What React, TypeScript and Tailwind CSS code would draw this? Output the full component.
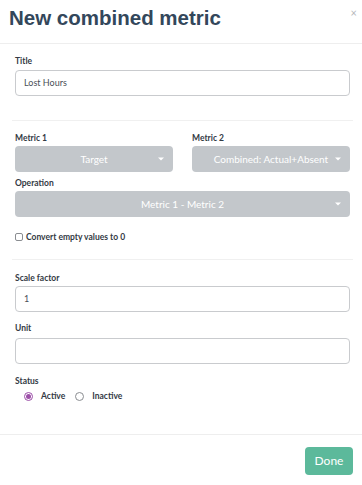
const Caret = () => (
  <span className="absolute right-[9px] top-1/2 -translate-y-1/2 w-0 h-0 border-l-[3px] border-r-[3px] border-t-[3px] border-l-transparent border-r-transparent border-t-white" />
);

const Select = ({ value, className }: { value: string; className?: string }) => (
  <div
    className={
      "relative h-[26px] rounded-[4px] bg-[#c3c7cb] flex items-center justify-center text-white text-[10px] " +
      (className || "")
    }
  >
    <span>{value}</span>
    <Caret />
  </div>
);

const Label = ({ children, className }: { children: React.ReactNode; className?: string }) => (
  <div className={"h-[12px] leading-[12px] text-[8.5px] font-bold text-[#333a44] " + (className || "")}>
    {children}
  </div>
);

const Input = ({ value, className }: { value?: string; className?: string }) => (
  <div
    className={
      "h-[26px] rounded-[4px] border border-[#c9cbce] bg-white flex items-center px-[8px] text-[9px] text-[#4a4f57] " +
      (className || "")
    }
  >
    {value}
  </div>
);

export default function App() {
  return (
    <div className="w-[362px] h-[485px] bg-white font-['Lato','Noto_Sans',sans-serif] overflow-hidden">
      <div className="relative h-[44px] border-b border-[#eeeeee] flex items-center pl-[9px]">
        <h1 className="font-['Liberation_Sans',Arial,sans-serif] font-bold text-[20.5px] text-[#33475b] leading-none -mt-[7px]">
          New combined metric
        </h1>
        <span className="absolute right-[5px] top-[7px] text-[11px] leading-none text-[#b5b8bb]">×</span>
      </div>

      <div className="pl-[15px] pr-[12px]">
        <Label className="mt-[11px]">Title</Label>
        <Input value="Lost Hours" className="mt-[3px]" />

        <div className="mt-[24px] -mx-[3px] h-px bg-[#f0f0f0]" />

        <div className="mt-[11px] grid grid-cols-2 gap-x-[19px]">
          <div>
            <Label>Metric 1</Label>
            <Select value="Target" className="mt-[2px]" />
          </div>
          <div>
            <Label>Metric 2</Label>
            <Select value="Combined: Actual+Absent" className="mt-[2px]" />
          </div>
        </div>

        <Label className="mt-[5px]">Operation</Label>
        <Select value="Metric 1 - Metric 2" className="mt-[2px]" />

        <label className="mt-[14px] h-[12px] flex items-center gap-[3px] text-[8.5px] font-bold text-[#333a44]">
          <span className="w-[8px] h-[8px] border border-[#8a8d91] rounded-[2px] bg-white" />
          Convert empty values to 0
        </label>

        <div className="mt-[16px] -mx-[3px] h-px bg-[#f0f0f0]" />

        <Label className="mt-[12px]">Scale factor</Label>
        <Input value="1" className="mt-[2px] h-[25px]" />

        <Label className="mt-[10px]">Unit</Label>
        <Input className="mt-[4px]" />

        <Label className="mt-[11px]">Status</Label>
        <div className="mt-[2px] h-[14px] flex items-center pl-[9px] text-[8.5px] font-bold text-[#333a44]">
          <span className="w-[9px] h-[9px] rounded-full border border-[#9c4fa8] flex items-center justify-center">
            <span className="w-[5px] h-[5px] rounded-full bg-[#9c4fa8]" />
          </span>
          <span className="ml-[8px]">Active</span>
          <span className="ml-[10px] w-[9px] h-[9px] rounded-full border border-[#8a8d91]" />
          <span className="ml-[8px]">Inactive</span>
        </div>
      </div>

      <div className="mt-[31px] border-t border-[#eeeeee] flex justify-end pr-[9px] pt-[12px]">
        <button className="w-[48px] h-[28px] rounded-[4px] bg-[#5cb99b] text-white text-[12px]">Done</button>
      </div>
    </div>
  );
}
